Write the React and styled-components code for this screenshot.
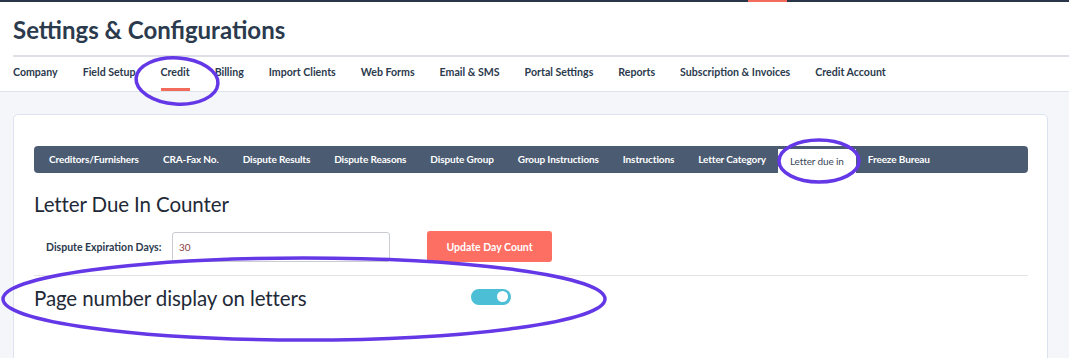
import React from "react";
import styled, { createGlobalStyle } from "styled-components";

const Global = createGlobalStyle`
  html, body { margin: 0; padding: 0; background: #f5f6fa; }
  body { font-family: Lato, "Noto Sans", sans-serif; color: #2b3a4d; }
  * { box-sizing: border-box; }
`;

const Page = styled.div`
  position: relative;
  width: 1069px;
  height: 358px;
  overflow: hidden;
  background: #f5f6fa;
`;

const TopStrip = styled.div`
  display: flex;
  height: 2px;
  background: #2a3547;
`;

const TopMark = styled.div`
  margin-left: 748px;
  width: 39px;
  background: #f26b5b;
`;

const Header = styled.header`
  background: #fff;
  padding-left: 13px;
  border-bottom: 1px solid #dfe4ec;
`;

const Title = styled.h1`
  margin: 0;
  padding: 13px 0 11px;
  font-size: 24px;
  line-height: 29px;
  font-weight: 700;
  color: #2b3a4d;
  border-bottom: 2px solid #dde1e7;
`;

const Nav = styled.nav`
  display: flex;
  gap: 25px;
  height: 34px;
`;

const NavItem = styled.div`
  display: flex;
  align-items: center;
  font-size: 10.6px;
  font-weight: 700;
  color: #2b3a4d;
  white-space: nowrap;
  border-bottom: 3px solid ${(p) => (p.$active ? "#f26b5b" : "transparent")};
  padding-bottom: 1px;
`;

const Card = styled.section`
  margin: 22px 21px 0 13px;
  background: #fff;
  border: 1px solid #dde3ee;
  border-radius: 5px;
  padding: 31px 19px 60px 20px;
  height: 300px;
`;

const SubTabs = styled.div`
  display: flex;
  align-items: stretch;
  height: 27px;
  background: #4a5b72;
  border-radius: 4px;
  padding: 0 0 0 3px;
`;

const SubTab = styled.div`
  display: flex;
  align-items: center;
  padding: 0 12px 2px;
  font-size: 10px;
  letter-spacing: -0.12px;
  white-space: nowrap;
  color: ${(p) => (p.$active ? "#3a4658" : "#fff")};
  background: ${(p) => (p.$active ? "#fff" : "transparent")};
  font-weight: ${(p) => (p.$active ? 400 : 700)};
  margin-top: ${(p) => (p.$active ? "3px" : "0")};
  padding-top: ${(p) => (p.$active ? "2px" : "0")};
`;

const SectionTitle = styled.h2`
  margin: 0;
  font-size: 20.5px;
  line-height: 26px;
  font-weight: 400;
  color: #1f2a37;
  letter-spacing: -0.1px;
`;

const CounterTitle = styled(SectionTitle)`
  margin-top: 18px;
`;

const FormRow = styled.div`
  display: flex;
  align-items: center;
  margin-top: 14px;
  padding-left: 12px;
  padding-bottom: 13px;
  border-bottom: 1px solid #e4e4e4;
`;

const Label = styled.label`
  font-size: 10.5px;
  font-weight: 700;
  color: #2b3a4d;
  width: 126px;
`;

const Input = styled.div`
  width: 218px;
  height: 30px;
  border: 1px solid #c9ccd3;
  border-radius: 3px;
  display: flex;
  align-items: center;
  padding-left: 6px;
  font-size: 10px;
  color: #8a3c3c;
`;

const Button = styled.button`
  margin-left: 37px;
  width: 125px;
  height: 31px;
  border: none;
  border-radius: 3px;
  background: #fd6f63;
  color: #fff;
  font-family: Lato, "Noto Sans", sans-serif;
  font-size: 10.5px;
  font-weight: 700;
`;

const ToggleRow = styled.div`
  display: grid;
  grid-template-columns: 437px auto;
  align-items: center;
  margin-top: 9px;
`;

const Toggle = styled.div`
  width: 40px;
  height: 16px;
  border-radius: 8px;
  background: #4cbfd6;
  display: flex;
  align-items: center;
  justify-content: flex-end;
  padding-right: 3px;
  margin-top: -3px;
`;

const Knob = styled.div`
  width: 11px;
  height: 11px;
  border-radius: 50%;
  background: #fff;
`;

const Annotation = styled.svg`
  position: absolute;
  left: 0;
  top: 0;
  width: 1069px;
  height: 358px;
  pointer-events: none;
`;

const navItems = [
  "Company",
  "Field Setup",
  "Credit",
  "Billing",
  "Import Clients",
  "Web Forms",
  "Email & SMS",
  "Portal Settings",
  "Reports",
  "Subscription & Invoices",
  "Credit Account",
];

const subTabs = [
  "Creditors/Furnishers",
  "CRA-Fax No.",
  "Dispute Results",
  "Dispute Reasons",
  "Dispute Group",
  "Group Instructions",
  "Instructions",
  "Letter Category",
  "Letter due in",
  "Freeze Bureau",
];

export default function App() {
  return (
    <Page>
      <Global />
      <TopStrip>
        <TopMark />
      </TopStrip>
      <Header>
        <Title>Settings &amp; Configurations</Title>
        <Nav>
          {navItems.map((n) => (
            <NavItem key={n} $active={n === "Credit"}>
              {n}
            </NavItem>
          ))}
        </Nav>
      </Header>
      <Card>
        <SubTabs>
          {subTabs.map((t) => (
            <SubTab key={t} $active={t === "Letter due in"}>
              {t}
            </SubTab>
          ))}
        </SubTabs>
        <CounterTitle>Letter Due In Counter</CounterTitle>
        <FormRow>
          <Label>Dispute Expiration Days:</Label>
          <Input>30</Input>
          <Button>Update Day Count</Button>
        </FormRow>
        <ToggleRow>
          <SectionTitle>Page number display on letters</SectionTitle>
          <Toggle>
            <Knob />
          </Toggle>
        </ToggleRow>
      </Card>
      <Annotation viewBox="0 0 1069 358">
        <g fill="none" stroke="#6438e6" strokeWidth="3.5">
          <ellipse cx="177" cy="81" rx="41" ry="23" transform="rotate(4 177 81)" />
          <ellipse cx="819" cy="161" rx="40" ry="21" />
          <ellipse cx="304" cy="299" rx="301" ry="41" />
        </g>
      </Annotation>
    </Page>
  );
}
